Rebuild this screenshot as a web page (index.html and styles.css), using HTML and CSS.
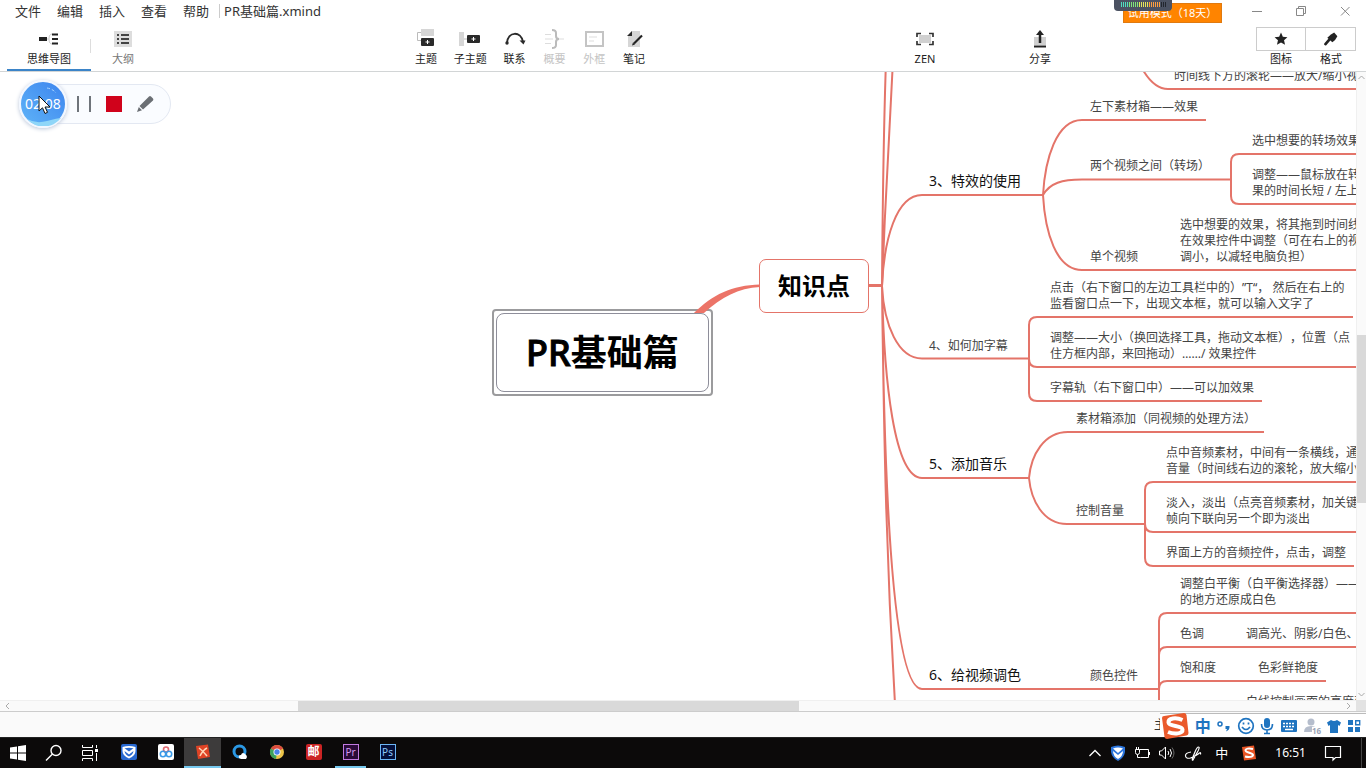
FILE: index.html
```html
<!DOCTYPE html>
<html lang="zh-CN">
<head>
<meta charset="utf-8">
<title>PR基础篇.xmind</title>
<link rel="stylesheet" href="styles.css">
</head>
<body>
<header class="titlebar">
  <nav class="menu">
    <button>文件</button><button>编辑</button><button>插入</button><button>查看</button><button>帮助</button>
  </nav>
  <span class="doc-title">PR基础篇.xmind</span>
  <button class="trial">试用模式（18天）</button>
  <div class="window-buttons">
    <button aria-label="最小化"><svg width="12" height="12" viewBox="0 0 12 12"><path d="M1 6.5h10"/></svg></button>
    <button aria-label="还原"><svg width="12" height="12" viewBox="0 0 12 12"><path d="M1.5 3.5h7v7h-7zM3.5 3.500v-2h7v7h-2"/></svg></button>
    <button aria-label="关闭"><svg width="12" height="12" viewBox="0 0 12 12"><path d="M2 2l8.500 8.500M10.500 2L2 10.500"/></svg></button>
  </div>
  <svg class="meter" width="58" height="11" viewBox="0 0 58 11">
    <g stroke-width="1"><path stroke="#4fe0c0" d="M7.500 2v5M9.500 2v5M11.500 2v5M13.500 2v5"/><path stroke="#7fe878" d="M15.500 2v5M17.500 2v5M19.500 2v5M21.500 2v5M23.500 2v5"/><path stroke="#e6e65a" d="M25.500 2v5M27.500 2v5M29.500 2v5M31.500 2v5M33.500 2v5"/><path stroke="#ffa040" d="M35.500 2v5M37.500 2v5M39.500 2v5M41.500 2v5M43.500 2v5M45.500 2v5"/><path stroke="#22262e" d="M47.500 2v5M49.500 2v5M51.500 2v5"/></g>
  </svg>
</header>

<div class="toolbar">
  <div class="views">
    <button class="view current"><svg width="24" height="20" viewBox="0 0 24 20"><path d="M2 8h8v4H2z" fill="#222"/><path d="M10 10h2M15 5q-3 0-3 5t3 5" fill="none" stroke="#ccc"/><path d="M15 5.500h6M15 10h6M15 14.500h6" stroke="#222" stroke-width="2"/></svg><span>思维导图</span></button>
    <button class="view"><svg width="24" height="20" viewBox="0 0 24 20"><path d="M3 2h18v16H3z" fill="#ddd"/><path d="M6 6h2M10 6h8M6 10h2M10 10h8M6 14h2M10 14h8" stroke="#444" stroke-width="2"/></svg><span>大纲</span></button>
  </div>
  <div class="tools">
    <button class="tool"><svg width="24" height="20" viewBox="0 0 24 20"><path d="M7 0h13v7H7z" fill="#d6d6d6"/><path d="M7 3.500H3.500v8H7" fill="none" stroke="#bbb"/><rect x="7" y="9" width="13" height="8" rx="1" fill="#2a2a2a"/><path d="M13.500 11v4M11.500 13h4" stroke="#fff"/></svg><span>主题</span></button>
    <button class="tool wide"><svg width="24" height="20" viewBox="0 0 24 20"><path d="M1 3h5v14H1z" fill="#d6d6d6"/><path d="M6 10h3" stroke="#bbb"/><rect x="9" y="6" width="13" height="8" rx="1" fill="#2a2a2a"/><path d="M15.500 8v4M13.500 10h4" stroke="#fff"/></svg><span>子主题</span></button>
    <button class="tool"><svg width="24" height="20" viewBox="0 0 24 20"><path d="M4 14C5 2 18 2 20 13" fill="none" stroke="#2a2a2a" stroke-width="2"/><circle cx="4" cy="14" r="1.700" fill="#2a2a2a"/><path d="M16.500 11.500l6 0-2 4z" fill="#2a2a2a"/></svg><span>联系</span></button>
    <button class="tool" disabled><svg width="24" height="20" viewBox="0 0 24 20"><path d="M10 1q4 0 4 3v3q0 3 3 3-3 0-3 3v3q0 3-4 3" fill="none" stroke="#bbb" stroke-width="2"/><path d="M3 5.500h6M3 10h8M3 14.500h6M17 10h5" stroke="#ddd"/></svg><span>概要</span></button>
    <button class="tool" disabled><svg width="24" height="20" viewBox="0 0 24 20"><path d="M4 3h17v14H4z" fill="none" stroke="#c4c4c4" stroke-width="2"/><path d="M7 8h8M7 12h5" stroke="#ddd"/></svg><span>外框</span></button>
    <button class="tool"><svg width="24" height="20" viewBox="0 0 24 20"><path d="M10 2h8v16H6V7z" fill="#d6d6d6"/><path d="M5 7l5-5v5z" fill="#2a2a2a"/><path d="M12 14.500l8-8" stroke="#222" stroke-width="2.200"/><path d="M10 16.500l1-3 2 2z" fill="#222"/></svg><span>笔记</span></button>
  </div>
  <button class="tool zen"><svg width="24" height="20" viewBox="0 0 24 20"><path d="M6 6h12v8H6z" fill="#d0d0d0"/><path d="M8 4.500H4V8M16 4.500h4V8M8 15.500H4V12M16 15.500h4V12" fill="none" stroke="#333" stroke-width="1.700"/></svg><span>ZEN</span></button>
  <button class="tool share"><svg width="24" height="20" viewBox="0 0 24 20"><path d="M6 8h12v8H6z" fill="#d0d0d0"/><path d="M6 17.500h12" stroke="#222" stroke-width="2"/><path d="M12 14V5" stroke="#222" stroke-width="2.500"/><path d="M8 6l4-5 4 5z" fill="#222"/></svg><span>分享</span></button>
  <div class="panels">
    <button class="panel"><svg width="24" height="24" viewBox="0 0 24 24"><path d="M12 5l2 4.500 5 .5-3.700 3.300 1.100 5L12 15.700l-4.400 2.600 1.100-5L5 10l5-.5z" fill="#222"/></svg><span>图标</span></button>
    <button class="panel"><svg width="24" height="24" viewBox="0 0 24 24"><path d="M12.500 7l3.500-2 3.500 4-2.500 4-3 2.500-5.500-5z" fill="#222"/><path d="M10.500 13l-4 4.500" stroke="#222" stroke-width="3" stroke-linecap="round"/></svg><span>格式</span></button>
  </div>
</div>

<main class="workspace">
  <div class="canvas">
    <div class="sheet">
      <div class="root"><h1><span class="latin">PR</span>基础篇</h1></div>
      <svg class="links" width="1800" height="900" viewBox="0 0 1800 900">
        <path class="taper" d="M694 313C712 295 732 285 760 284.500v2.500C738 288 722 297 704 313z"/>
        <path class="trunk" d="M869 285.500h13"/>
        <path d="M882 286Q883 150 886 60M882 286C885 210 889 130 893 60"/>
        <path d="M882 286C884 240 896 195 922 195h121M882 286C884 325 898 358.500 922 358.500h107M882 286C884 380 894 478 922 478h107M882 286C884 480 892 689 922 689h237M882 286C884 440 886 560 896 720"/>
        <path d="M1130 40Q1146 89 1168 89h632"/>
        <path d="M1043 195C1045 160 1056 120 1082 120h124M1043 195C1050 183 1062 179.500 1082 179.500h149M1043 195C1045 232 1056 270 1082 270h718"/>
        <path d="M1800 154h-561q-8 0-8 8v34q0 8 8 8h561"/>
        <path d="M1353 317h-316q-8 0-8 8v68q0 8 8 8h225M1029 359q0 8 8 8h763"/>
        <path d="M1029 478C1031 455 1044 432 1068 432h196M1029 478C1031 500 1043 524 1067 524h78"/>
        <path d="M1800 482h-647q-8 0-8 8v68q0 8 8 8h201M1145 524q0 8 8 8h647"/>
        <path d="M1800 613h-633q-8 0-8 8v100M1159 655q0-8 8-8h633M1159 689q0-8 8-8h159"/>
      </svg>
      <div class="main-topic">知识点</div>
      <div class="topic t-wheel">时间线下方的滚轮——放大/缩小视频</div>
      <div class="topic major t-fx">3、特效的使用</div>
      <div class="topic t-box">左下素材箱——效果</div>
      <div class="topic t-trans">两个视频之间（转场）</div>
      <div class="topic t-pick">选中想要的转场效果</div>
      <div class="topic t-adjust">调整——鼠标放在转场<br>果的时间长短 / 左上角</div>
      <div class="topic t-drag">选中想要的效果，将其拖到时间线<br>在效果控件中调整（可在右上的视频<br>调小，以减轻电脑负担）</div>
      <div class="topic t-single">单个视频</div>
      <div class="topic t-sub">4、如何加字幕</div>
      <div class="topic t-click">点击（右下窗口的左边工具栏中的）”T“， 然后在右上的<br>监看窗口点一下，出现文本框，就可以输入文字了</div>
      <div class="topic t-size">调整——大小（换回选择工具，拖动文本框），位置（点<br>住方框内部，来回拖动）……/ 效果控件</div>
      <div class="topic t-track">字幕轨（右下窗口中）——可以加效果</div>
      <div class="topic major t-music">5、添加音乐</div>
      <div class="topic t-add">素材箱添加（同视频的处理方法）</div>
      <div class="topic t-volume">控制音量</div>
      <div class="topic t-line">点中音频素材，中间有一条横线，通过<br>音量（时间线右边的滚轮，放大缩小）</div>
      <div class="topic t-fade">淡入，淡出（点亮音频素材，加关键<br>帧向下联向另一个即为淡出</div>
      <div class="topic t-audio">界面上方的音频控件，点击，调整</div>
      <div class="topic major t-color">6、给视频调色</div>
      <div class="topic t-control">颜色控件</div>
      <div class="topic t-white">调整白平衡（白平衡选择器）——<br>的地方还原成白色</div>
      <div class="topic t-tone">色调</div>
      <div class="topic t-light">调高光、阴影/白色、</div>
      <div class="topic t-sat">饱和度</div>
      <div class="topic t-vivid">色彩鲜艳度</div>
      <div class="topic t-curve">白线控制画面的亮度变</div>
    </div>
    <div class="recorder">
      <div class="timer"><svg width="44" height="44" viewBox="0 0 44 44"><path d="M6 37Q15 42 26 39t14-3A22 22 0 0 1 6 37z" fill="#8fd6f8"/><path d="M26 6q6 1 9 5" fill="none" stroke="#a9d4ff" stroke-dasharray="3 2"/></svg><time>02:08</time></div>
      <button aria-label="暂停"><svg width="16" height="18" viewBox="0 0 16 18"><path d="M2 1v16M14 1v16" stroke="#6f747a" stroke-width="2"/></svg></button>
      <button class="stop" aria-label="停止"></button>
      <button aria-label="画笔"><svg width="18" height="18" viewBox="0 0 18 18"><path d="M13 1.500q1-.8 2 0l2 2q.8 1 0 2L7 14.500 3.500 11zM2.800 12l3.200 3.200L1 17z" fill="#6b6f74"/></svg></button>
      <svg class="pointer" width="13" height="20" viewBox="0 0 13 20"><path d="M1 1v15l3.500-3.200L7 18.500l2.500-1.200L7 12h5z" fill="#fff" stroke="#111"/></svg>
    </div>
  </div>
  <div class="vscroll"><svg width="9" height="10" viewBox="0 0 9 10"><path d="M1.500 7l3-3 3 3"/></svg><i class="before"></i><i class="thumb"></i><i class="after"></i><svg width="9" height="10" viewBox="0 0 9 10"><path d="M1.500 3l3 3 3-3"/></svg></div>
  <div class="hscroll"><svg width="14" height="10" viewBox="0 0 14 10"><path d="M9 2L6 5l3 3"/></svg><i class="before"></i><i class="thumb"></i><i class="after"></i><svg width="14" height="10" viewBox="0 0 14 10"><path d="M5 2l3 3-3 3"/></svg></div>
  <div class="corner"></div>
</main>

<footer class="status">
  <span>主题</span>
  <div class="ime">
    <svg class="sogou" width="30" height="28" viewBox="0 0 30 28"><path d="M4 4L24 1q2 0 2.500 2l2 18q0 2-2 2.500L7 27q-2 0-2.500-2L2 6q0-1.800 2-2z" fill="#ea5a2c"/><path d="M22.500 8C16 5 8 6 8.500 10.500S22 13 22.500 17.500 14 22.500 8 20" fill="none" stroke="#fff" stroke-width="4"/></svg>
    <b>中</b>
    <svg width="16" height="16" viewBox="0 0 16 16"><circle cx="4" cy="6" r="2" fill="none" stroke="#1f74c0" stroke-width="1.500"/><path d="M9.500 8h4q.5 4-3.500 5.500L11 11H9.500z" fill="#1f74c0"/></svg>
    <svg width="18" height="18" viewBox="0 0 18 18" fill="none" stroke="#1f74c0" stroke-width="1.700"><circle cx="9" cy="9" r="7.300"/><path d="M5 10q4 5 8 0"/><path d="M6.500 5.500v2M11.500 5.500v2"/></svg>
    <svg width="16" height="18" viewBox="0 0 16 18"><rect x="5" y="1" width="6" height="10" rx="3" fill="#1f74c0"/><path d="M2.500 7q0 6 5.500 6t5.500-6M8 13v3M5 16.500h6" fill="none" stroke="#1f74c0" stroke-width="1.600"/></svg>
    <svg width="18" height="16" viewBox="0 0 18 16"><rect x="1" y="2" width="16" height="12" rx="1" fill="#1f74c0"/><path d="M3 5.500h12M3 8.500h12" stroke="#fff" stroke-width="1.500" stroke-dasharray="2 1"/><path d="M5 11.500h8" stroke="#fff" stroke-width="1.500"/></svg>
    <span class="skin"><svg width="18" height="16" viewBox="0 0 18 16" fill="#b5bdcc"><circle cx="8" cy="4" r="3.500"/><path d="M1 14q0-6 7-6t7 6z"/></svg><small>16</small></span>
    <svg width="16" height="16" viewBox="0 0 16 16"><path d="M5 2q3 2 6 0l4 2.500L13.500 8 12 7v8H4V7L2.500 8 1 4.500z" fill="#1f74c0"/></svg>
    <svg width="14" height="14" viewBox="0 0 14 14"><path d="M1 1h5v5H1zM1 8h5v5H1zM8 8h5v5H8z" fill="#1f74c0"/><path d="M8.700 1.700h4v4h-4z" fill="none" stroke="#1f74c0" stroke-width="1.400"/></svg>
  </div>
</footer>

<div class="taskbar">
  <div class="system">
    <button aria-label="开始"><svg width="16" height="16" viewBox="0 0 16 16"><path d="M0 2.500l7-1v6H0zM8 1.300l8-1.300v7.500H8zM0 8.500h7v6l-7-1zM8 8.500h8V16l-8-1.300z" fill="#fff"/></svg></button>
    <button aria-label="搜索"><svg width="18" height="18" viewBox="0 0 18 18" fill="none" stroke="#fff" stroke-width="1.400"><circle cx="11" cy="6.500" r="5"/><path d="M7.500 10L1 16.500"/></svg></button>
    <button aria-label="任务视图"><svg width="18" height="16" viewBox="0 0 18 16" fill="none" stroke="#fff"><path d="M1.500 0v2.500h10V0M1.500 16v-2.500h10V16M1.500 5.500h10v5h-10zM15.500 0v3M15.500 8v8"/><path d="M14 4h3v3h-3z" fill="#fff" stroke="none"/></svg></button>
  </div>
  <div class="apps">
    <button aria-label="电脑管家"><svg width="16" height="16" viewBox="0 0 16 16"><rect width="16" height="16" rx="2" fill="#2868d0"/><path d="M1.500 3q6.500-2 13 0v4q0 5-6.500 7.500Q1.500 12 1.500 7z" fill="#fff"/><path d="M3.500 4.300q4.500-1.300 9 0L8 7.500z" fill="#2868d0"/><path d="M3.500 7l4.500 3.500L12.500 7q-.5 3.500-4.500 5.500Q4 10.500 3.500 7z" fill="#2868d0"/></svg></button>
    <button aria-label="网盘"><svg width="16" height="16" viewBox="0 0 16 16" fill="none" stroke-width="1.600"><rect width="16" height="16" rx="2" fill="#fff"/><circle cx="8" cy="5.500" r="2.500" stroke="#e06a72"/><circle cx="5" cy="10" r="2.700" stroke="#3a9ae8"/><circle cx="11" cy="10" r="2.700" stroke="#3a9ae8"/></svg></button>
    <button class="active" aria-label="XMind"><svg width="16" height="16" viewBox="0 0 16 16"><path d="M1 2l12-1.500L15 13 3 15z" fill="#df4325"/><path d="M4 4q4 3 8 8M12 4Q8 6 5 12" fill="none" stroke="#ffd7b8" stroke-width="1.500"/></svg></button>
    <button aria-label="浏览器"><svg width="16" height="16" viewBox="0 0 16 16"><circle cx="7.500" cy="7.500" r="5.500" fill="none" stroke="#2b98e4" stroke-width="3"/><path d="M7 14q-1-3 2-3 1-3 3.500-1.500T15 13l-1 2H9z" fill="#fff"/></svg></button>
    <button aria-label="Chrome"><svg width="16" height="16" viewBox="0 0 16 16"><circle cx="8" cy="8" r="7" fill="#edc448"/><path d="M8 8L1.900 4.500A7 7 0 0 1 14.100 4.500z" fill="#db4c3f"/><path d="M8 8L1.900 4.500A7 7 0 0 0 7 15z" fill="#3da35d"/><circle cx="8" cy="8" r="3.500" fill="#fff"/><circle cx="8" cy="8" r="2.700" fill="#4a84e8"/></svg></button>
    <button><span class="mail">邮</span></button>
    <button class="open"><span class="pr">Pr</span></button>
    <button><span class="ps">Ps</span></button>
  </div>
  <div class="tray">
    <svg width="14" height="16" viewBox="0 0 14 16"><path d="M1.500 11L7 5.500l5.500 5.500" fill="none" stroke="#fff" stroke-width="1.300"/></svg>
    <svg width="16" height="16" viewBox="0 0 16 16"><path d="M1 2q7-3 14 0v5q-1 6-7 9-6-3-7-9z" fill="#2c75dc"/><path d="M3 3.500q5-2 10 0L8 8z" fill="#fff"/><path d="M3 6l5 4 5-4q0 5-5 8-5-3-5-8z" fill="#fff"/></svg>
    <svg width="16" height="16" viewBox="0 0 16 16" fill="none" stroke="#fff"><path d="M5.500 4.500h9v8h-8M15.500 7v3M1.500 4.500v3q0 2 2 2t2-2v-3zM2.500 2v2M4.500 2v2M3.500 9.500v3h3"/></svg>
    <svg width="18" height="16" viewBox="0 0 18 16" fill="none" stroke="#fff"><path d="M1.500 6h2l4-4v12l-4-4h-2zM10 6q1.500 2 0 4M12 4q3 4 0 8"/><path d="M14 2.500q4 5.500 0 11" stroke="#666"/></svg>
    <svg width="18" height="16" viewBox="0 0 18 16" fill="none" stroke="#fff" stroke-width="1.200"><path d="M11 7q2-5 3.500-5t-.5 4l-5 9q-1 1-.5-2zM7 7Q1 8 1.500 11t5 2q7-3 9-5 1.500-1 1 1.500"/></svg>
    <b>中</b>
    <svg width="16" height="16" viewBox="0 0 16 16"><path d="M1 2l12-1.500L15 14 3 15.500z" fill="#ea5525"/><path d="M12 4C8 3 4.500 3.500 4.500 5.500S12 8 12 10 8 12.500 4 11.500" fill="none" stroke="#fff" stroke-width="2"/></svg>
    <time>16:51</time>
    <svg width="18" height="18" viewBox="0 0 18 18"><path d="M1.500 2.500h15v11h-5L9 16v-2.500H1.500z" fill="none" stroke="#fff" stroke-width="1.200"/></svg>
  </div>
</div>
</body>
</html>
```
FILE: styles.css
```css
* { box-sizing: border-box; }
body {
  margin: 0;
  height: 100vh;
  display: flex;
  flex-direction: column;
  overflow: hidden;
  background: #fff;
  color: #333;
  font: 12px/16px "Noto Sans", "Noto Sans CJK SC", sans-serif;
  text-spacing-trim: space-all;
}
button {
  padding: 0;
  border: 0;
  background: none;
  color: inherit;
  font: inherit;
}
svg { display: block; flex: none; }

/* title bar */
.titlebar {
  position: relative;
  display: flex;
  align-items: center;
  height: 24px;
  padding: 0 15px 2px;
  font-size: 13px;
}
.menu { display: flex; gap: 16px; }
.doc-title {
  margin-left: 10px;
  padding-left: 4px;
  border-left: 1px solid #ccc;
  line-height: 14px;
}
.trial {
  height: 20px;
  width: 99px;
  margin: 4px 29px 0 auto;
  border: 1px solid #e07a10;
  background: #ff8400;
  color: #fff;
  font-size: 11px;
  line-height: 18px;
  white-space: nowrap;
}
.window-buttons { display: flex; gap: 32px; }
.window-buttons path { fill: none; stroke: #888; }
.meter {
  position: absolute;
  top: 0;
  right: 194px;
  border-radius: 0 0 4px 4px;
  background: #4b5262;
}

/* toolbar */
.toolbar {
  display: grid;
  grid-template-columns: 406fr 248px 251fr 40px 75fr 40px 196fr 100px;
  height: 48px;
  padding-right: 10px;
  border-bottom: 1px solid #d2d5d6;
  color: #222;
  font-size: 11px;
}
.views { display: flex; padding-left: 7px; }
.view {
  display: flex;
  flex-direction: column;
  align-items: center;
  width: 64px;
  padding-top: 5px;
  gap: 2px;
  color: #777;
}
.view.current {
  width: 84px;
  border-bottom: 2px solid #3b84c8;
  background: linear-gradient(#ddd, #ddd) right 15px / 1px 14px no-repeat;
  color: #222;
}
.tools { display: flex; }
.tool {
  display: flex;
  flex-direction: column;
  align-items: center;
  width: 40px;
  padding-top: 5px;
  gap: 2px;
}
.tool.wide { width: 49px; }
.tool:disabled { color: #c4c4c4; }
.zen { grid-column: 4; }
.share { grid-column: 6; }
.panels { grid-column: 8; display: flex; }
.panel {
  display: flex;
  flex-direction: column;
  align-items: center;
  width: 50px;
  padding-top: 3px;
}
.panel svg {
  width: 100%;
  border: 1px solid #ccc;
}
.panel + .panel svg { border-left: 0; }

/* workspace */
.workspace {
  flex: 1;
  display: grid;
  grid-template-columns: 1fr 10px;
  grid-template-rows: 1fr 11px;
  min-height: 0;
  border-bottom: 1px solid #ccc;
}
.canvas { position: relative; overflow: hidden; }
.sheet {
  position: absolute;
  left: 0;
  top: -72px;
  white-space: nowrap;
}
.links {
  position: relative;
  fill: none;
  stroke: #e47469;
  stroke-width: 2;
}
.links .taper { fill: #ec7468; stroke: none; }
.links .trunk { stroke-width: 3; }
.root {
  position: absolute;
  left: 492px;
  top: 309px;
  padding: 2px;
  border: 2px solid #9b9b9d;
  border-radius: 4px;
}
.root h1 {
  margin: 0;
  padding: 16px 29px;
  border: 1px solid #8e8e9a;
  border-radius: 8px;
  color: #000;
  font-size: 36px;
  font-weight: 700;
  line-height: 45px;
}
.latin { font-weight: 500; -webkit-text-stroke: 1px #000; }
.main-topic {
  position: absolute;
  left: 759px;
  top: 259px;
  padding: 10px 18px;
  border: 1px solid #e47469;
  border-radius: 7px;
  background: #fff;
  color: #000;
  font-size: 24px;
  font-weight: 700;
  line-height: 32px;
}
.topic { position: absolute; color: #444; }
.topic.major { color: #111; font-size: 14px; }
.t-wheel { left: 1174px; top: 68px; }
.t-fx { left: 929px; top: 173px; }
.t-box { left: 1090px; top: 99px; }
.t-trans { left: 1090px; top: 158px; }
.t-pick { left: 1252px; top: 133px; }
.t-adjust { left: 1252px; top: 167px; }
.t-drag { left: 1180px; top: 217px; }
.t-single { left: 1090px; top: 249px; }
.t-sub { left: 929px; top: 338px; }
.t-click { left: 1050px; top: 280px; }
.t-size { left: 1050px; top: 330px; }
.t-track { left: 1050px; top: 380px; }
.t-music { left: 929px; top: 456px; }
.t-add { left: 1076px; top: 411px; }
.t-volume { left: 1076px; top: 503px; }
.t-line { left: 1166px; top: 445px; }
.t-fade { left: 1166px; top: 495px; }
.t-audio { left: 1166px; top: 545px; }
.t-color { left: 929px; top: 667px; }
.t-control { left: 1090px; top: 668px; }
.t-white { left: 1180px; top: 576px; }
.t-tone { left: 1180px; top: 626px; }
.t-light { left: 1246px; top: 626px; }
.t-sat { left: 1180px; top: 660px; }
.t-vivid { left: 1258px; top: 660px; }
.t-curve { left: 1246px; top: 694px; }

/* floating recorder */
.recorder {
  position: absolute;
  left: 20px;
  top: 12px;
  display: flex;
  align-items: center;
  gap: 14px;
  width: 151px;
  height: 40px;
  border: 1px solid #e3e8f2;
  border-radius: 20px;
  background: #fafcff;
}
.timer {
  display: grid;
  place-items: center;
  width: 48px;
  height: 48px;
  margin: 0 -5px 0 -2px;
  border: 2px solid #f2f7ff;
  border-radius: 50%;
  background: linear-gradient(45deg, #5fb4f8, #3c84ee);
  box-shadow: 0 1px 4px #b8c4d8;
  color: #fff;
  font-size: 14px;
}
.timer > * { grid-area: 1 / 1; }
.stop { width: 16px; height: 16px; background: #d0021b; }
.pointer { position: absolute; left: 17px; top: 10px; }

/* scroll bars */
.vscroll, .hscroll { display: flex; background: #fafafa; }
.vscroll { flex-direction: column; border-left: 1px solid #f0f0f0; }
.hscroll { border-top: 1px solid #f0f0f0; }
.vscroll path, .hscroll path { fill: none; stroke: #aaa; }
.thumb { background: #d9d9d9; }
.vscroll .before { flex: 253; }
.vscroll .thumb { flex: 168; }
.vscroll .after { flex: 187; }
.hscroll .before { flex: 284; }
.hscroll .thumb { flex: 501; }
.hscroll .after { flex: 543; }
.corner { background: #e3e3e3; }

/* status bar and input method strip */
.status {
  position: relative;
  display: flex;
  justify-content: flex-end;
  align-items: center;
  height: 25px;
  padding-right: 188px;
  background: #fafafa;
}
.ime {
  position: absolute;
  right: 0;
  bottom: 0;
  display: flex;
  align-items: center;
  justify-content: space-between;
  width: 206px;
  height: 24px;
  padding-right: 5px;
  border-top: 1px solid #bbb;
  background: #fff;
}
.ime b { color: #1f74c0; font-size: 16px; }
.sogou { margin: -2px 0; }
.skin { display: grid; }
.skin > * { grid-area: 1 / 1; }
.skin small {
  place-self: end;
  background: #fff;
  color: #99a3b6;
  font-size: 8px;
  font-weight: 700;
  line-height: 7px;
}

/* taskbar */
.taskbar {
  display: flex;
  height: 31px;
  border-top: 1px solid #222;
  background: #0c0a0a;
  color: #fff;
}
.system, .apps { display: flex; }
.system button { width: 36px; }
.apps { margin-left: 2px; }
.apps button { width: 37px; border-bottom: 2px solid transparent; }
.system button, .apps button { display: grid; place-items: center; }
.apps .active { border-color: #76c8ee; background: #3d3b3b; }
.apps .open { border-image: linear-gradient(90deg, transparent 12%, #76c8ee 12%, #76c8ee 88%, transparent 88%) 2; }
.mail {
  width: 16px;
  height: 16px;
  border-radius: 2px;
  background: #cb2424;
  font-size: 12px;
  font-weight: 700;
  line-height: 15px;
}
.pr, .ps {
  width: 16px;
  height: 16px;
  border: 1px solid #c27ae0;
  background: #2a0a38;
  color: #d59af0;
  font-size: 10px;
  line-height: 14px;
}
.ps { border-color: #6cb6f5; background: #03103c; color: #8cc8fa; }
.tray {
  display: flex;
  align-items: center;
  gap: 8px;
  margin: 0 4px 0 auto;
  padding-right: 19px;
  border-right: 1px solid #444;
}
.tray b { margin: 0 5px; font-size: 13px; font-weight: 400; }
.tray time { margin: 0 10px; }
```
